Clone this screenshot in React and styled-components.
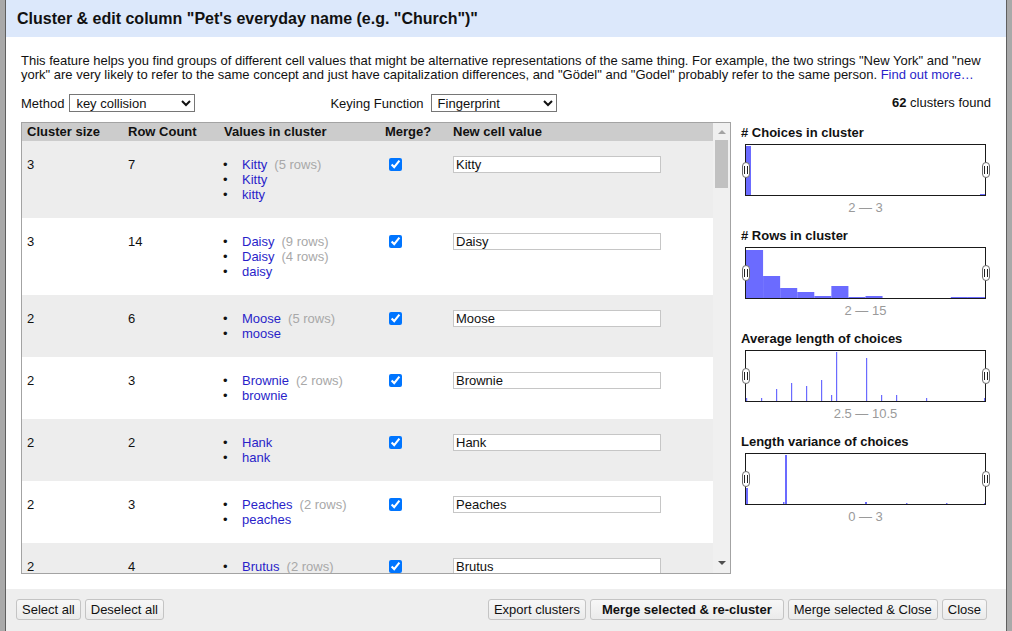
import React from 'react';
import styled, { createGlobalStyle } from 'styled-components';

const GlobalStyle = createGlobalStyle`
  html, body {
    margin: 0;
    padding: 0;
    background: #a9a9a9;
  }
  body {
    font-family: "Liberation Sans", Arial, sans-serif;
    font-size: 13px;
    color: #111;
  }
`;

const FONT = '"Liberation Sans", Arial, sans-serif';

const Screen = styled.div`
  display: flex;
  height: 631px;
  padding: 0 5px;
  box-sizing: border-box;
  background: #a9a9a9;
`;

const Dialog = styled.div`
  flex: 1;
  min-width: 0;
  display: flex;
  flex-direction: column;
  background: #fff;
  border-left: 1px solid #5f5f5f;
  border-right: 1px solid #5f5f5f;
`;

const Header = styled.div`
  flex: none;
  height: 37px;
  display: flex;
  align-items: center;
  padding: 0 11px;
  background: #dce8fb;
  font: bold 16px ${FONT};
  color: #111;
`;

const Body = styled.div`
  flex: 1;
  min-height: 0;
  display: flex;
  flex-direction: column;
  padding: 17px 15px 15px;
`;

const Description = styled.p`
  margin: 0;
  line-height: 14px;
  font-size: 13px;

  a {
    color: #2a1fc9;
    text-decoration: none;
  }
`;

const Controls = styled.div`
  display: flex;
  align-items: center;
  height: 18px;
  margin: 12px 0 10px;
`;

const Field = styled.label`
  display: flex;
  align-items: center;
  gap: ${(p) => p.$gap}px;
  margin-left: ${(p) => p.$offset || 0}px;
`;

const Select = styled.select`
  width: ${(p) => p.$width}px;
  height: 18px;
  margin-top: -1px;
  font: 13px ${FONT};
  color: #111;
  border: 1px solid #767676;
  border-radius: 0;
  background: #fff;
  padding: 0 2px;
`;

const Count = styled.div`
  margin-left: auto;
  margin-top: -1px;
  b { font-weight: bold; }
`;

const Main = styled.div`
  flex: 1;
  min-height: 0;
  display: flex;
  gap: 10px;
`;

const TableFrame = styled.div`
  width: 710px;
  flex: none;
  display: flex;
  box-sizing: border-box;
  border: 1px solid #a3a3a3;
`;

const TableScroll = styled.div`
  flex: 1;
  min-width: 0;
  overflow: hidden;
`;

const ScrollBar = styled.div`
  width: 17px;
  flex: none;
  display: flex;
  flex-direction: column;
  background: #f0f0f0;
`;

const ScrollArrow = styled.div`
  height: 17px;
  display: flex;
  justify-content: center;
  align-items: ${(p) => (p.$down ? 'flex-start' : 'flex-end')};
  padding: ${(p) => (p.$down ? '5px 0 0' : '0 0 6px')};
  box-sizing: border-box;

  &::before {
    content: '';
    width: 0;
    height: 0;
    border-left: 4px solid transparent;
    border-right: 4px solid transparent;
    ${(p) => (p.$down
    ? 'border-top: 4px solid #505050;'
    : 'border-bottom: 4px solid #a3a3a3;')}
  }
`;

const ScrollTrack = styled.div`
  flex: 1;
  padding: 0 2px;
`;

const ScrollThumb = styled.div`
  height: 48px;
  background: #c1c1c1;
`;

const COLS = '101px 96px 161px 68px 1fr';

const HeadRow = styled.div`
  display: grid;
  grid-template-columns: ${COLS};
  background: #cccccc;
  font-weight: bold;
  line-height: 18px;
`;

const Row = styled.div`
  display: grid;
  grid-template-columns: ${COLS};
  padding: 16px 0;
  line-height: 15px;
  background: ${(p) => (p.$odd ? '#ededed' : '#fff')};
`;

const Cell = styled.div`
  padding: 0 5px;
  min-width: 0;
`;

const Values = styled.ul`
  margin: 0;
  padding-left: 18px;
  list-style: disc;
`;

const Value = styled.li`
  color: #111;

  &::marker {
    content: '•\u00a0\u00a0\u00a0\u00a0';
    color: #111;
  }
`;

const ValueName = styled.span`
  color: #2a1fc9;
`;

const ValueRows = styled.span`
  color: #a8a8a8;
  margin-left: 7px;
`;

const Check = styled.input`
  width: 13px;
  height: 13px;
  margin: 1px 0 0 4px;
`;

const TextInput = styled.input`
  width: 208px;
  height: 17px;
  box-sizing: border-box;
  margin-top: -1px;
  padding: 0 2px;
  border: 1px solid #c6c6c6;
  font: 13px ${FONT};
  color: #111;
`;

const Side = styled.div`
  flex: 1;
  padding-top: 3px;
`;

const Hist = styled.div`
  margin-bottom: 12px;
`;

const HistTitle = styled.div`
  font-weight: bold;
  line-height: 16px;
`;

const HistBox = styled.div`
  position: relative;
  width: 241px;
  height: 52px;
  box-sizing: border-box;
  margin: 3px 0 0 4px;
  border: 1px solid #1a1a1a;

  svg {
    display: block;
  }
`;

const Handle = styled.span`
  position: absolute;
  top: 50%;
  ${(p) => (p.$right ? 'right: -5px;' : 'left: -4px;')}
  width: 8px;
  height: 16px;
  margin-top: -8px;
  box-sizing: border-box;
  border: 1px solid #6a6a6a;
  border-radius: 4px;
  background: #fff;

  &::before {
    content: '';
    position: absolute;
    left: 1px;
    top: 3px;
    width: 2px;
    height: 8px;
    border-left: 1px solid #222;
    border-right: 1px solid #222;
  }
`;

const HistRange = styled.div`
  width: 241px;
  margin: 4px 0 0 4px;
  text-align: center;
  line-height: 16px;
  color: #9a9a9a;
`;

const Footer = styled.div`
  flex: none;
  height: 42px;
  display: flex;
  align-items: center;
  gap: 4px;
  padding: 0 19px 0 10px;
  background: #eeeeee;
`;

const Spacer = styled.div`
  flex: 1;
`;

const Button = styled.button`
  height: 21px;
  margin-top: -1px;
  padding: 0 ${(p) => (p.$primary ? 11 : 5)}px;
  border: 1px solid #c4c4c4;
  border-radius: 3px;
  background: linear-gradient(#f7f7f7, #ebebeb);
  font: ${(p) => (p.$primary ? 'bold' : 'normal')} 13px ${FONT};
  color: #111;
  cursor: pointer;
`;

const BAR = '#6b6bff';

const clusters = [
  { size: 3, count: 7, values: [['Kitty', 5], ['Kitty'], ['kitty']], merged: 'Kitty' },
  { size: 3, count: 14, values: [['Daisy', 9], ['Daisy', 4], ['daisy']], merged: 'Daisy' },
  { size: 2, count: 6, values: [['Moose', 5], ['moose']], merged: 'Moose' },
  { size: 2, count: 3, values: [['Brownie', 2], ['brownie']], merged: 'Brownie' },
  { size: 2, count: 2, values: [['Hank'], ['hank']], merged: 'Hank' },
  { size: 2, count: 3, values: [['Peaches', 2], ['peaches']], merged: 'Peaches' },
  { size: 2, count: 4, values: [['Brutus', 2], ['brutus']], merged: 'Brutus' },
  { size: 2, count: 3, values: [['Max', 2], ['max']], merged: 'Max' },
];

const rowsBins = [48, 22, 10, 6, 2, 12, 1, 2, 0, 0, 0, 0, 1, 1];

const histograms = [
  {
    title: '# Choices in cluster',
    range: '2 — 3',
    bars: [
      { x: 0, w: 5, h: 49 },
      { x: 234, w: 5, h: 1 },
    ],
  },
  {
    title: '# Rows in cluster',
    range: '2 — 15',
    bars: rowsBins.map((h, i) => ({ x: i * 17.07, w: 17.07, h })),
  },
  {
    title: 'Average length of choices',
    range: '2.5 — 10.5',
    bars: [
      [0, 3], [15, 3], [30, 12], [45, 18], [60, 15], [75, 21], [85, 6],
      [90, 49], [120, 43], [135, 6], [150, 6], [180, 3], [238, 3],
    ].map(([x, h]) => ({ x, w: 1.2, h })),
  },
  {
    title: 'Length variance of choices',
    range: '0 — 3',
    bars: [
      { x: 0, w: 2, h: 16 },
      { x: 37, w: 1.5, h: 2 },
      { x: 39, w: 2, h: 49 },
      { x: 119, w: 2, h: 2 },
      { x: 160, w: 1.5, h: 1 },
      { x: 200, w: 1.5, h: 1 },
      { x: 238, w: 1.5, h: 1 },
    ],
  },
];

function Histogram({ title, range, bars }) {
  return (
    <Hist>
      <HistTitle>{title}</HistTitle>
      <HistBox>
        <svg width="239" height="50" viewBox="0 0 239 50">
          {bars.map((b, i) => (
            <rect key={i} x={b.x} y={50 - b.h} width={b.w} height={b.h} fill={BAR} />
          ))}
        </svg>
        <Handle />
        <Handle $right />
      </HistBox>
      <HistRange>{range}</HistRange>
    </Hist>
  );
}

function ClusterRow({ cluster, odd }) {
  return (
    <Row $odd={odd}>
      <Cell>{cluster.size}</Cell>
      <Cell>{cluster.count}</Cell>
      <Cell>
        <Values>
          {cluster.values.map(([v, n], i) => (
            <Value key={i}>
              <ValueName>{v}</ValueName>
              {n ? <ValueRows>({n} rows)</ValueRows> : null}
            </Value>
          ))}
        </Values>
      </Cell>
      <Cell>
        <Check type="checkbox" defaultChecked />
      </Cell>
      <Cell>
        <TextInput type="text" defaultValue={cluster.merged} />
      </Cell>
    </Row>
  );
}

export default function App() {
  return (
    <>
      <GlobalStyle />
      <Screen>
        <Dialog>
          <Header>Cluster &amp; edit column "Pet's everyday name (e.g. "Church")"</Header>
          <Body>
            <Description>
              This feature helps you find groups of different cell values that might be alternative
              representations of the same thing. For example, the two strings "New York" and "new
              york" are very likely to refer to the same concept and just have capitalization
              differences, and "Gödel" and "Godel" probably refer to the same person.{' '}
              <a href="#help">Find out more…</a>
            </Description>
            <Controls>
              <Field $gap={5}>
                Method
                <Select $width={126} defaultValue="key collision">
                  <option>key collision</option>
                  <option>nearest neighbor</option>
                </Select>
              </Field>
              <Field $gap={7} $offset={135}>
                Keying Function
                <Select $width={126} defaultValue="Fingerprint">
                  <option>Fingerprint</option>
                  <option>ngram-fingerprint</option>
                  <option>metaphone3</option>
                  <option>cologne-phonetic</option>
                </Select>
              </Field>
              <Count>
                <b>62</b> clusters found
              </Count>
            </Controls>
            <Main>
              <TableFrame>
                <TableScroll>
                  <HeadRow>
                    <Cell>Cluster size</Cell>
                    <Cell>Row Count</Cell>
                    <Cell>Values in cluster</Cell>
                    <Cell>Merge?</Cell>
                    <Cell>New cell value</Cell>
                  </HeadRow>
                  {clusters.map((c, i) => (
                    <ClusterRow key={i} cluster={c} odd={i % 2 === 0} />
                  ))}
                </TableScroll>
                <ScrollBar>
                  <ScrollArrow />
                  <ScrollTrack>
                    <ScrollThumb />
                  </ScrollTrack>
                  <ScrollArrow $down />
                </ScrollBar>
              </TableFrame>
              <Side>
                {histograms.map((h) => (
                  <Histogram key={h.title} {...h} />
                ))}
              </Side>
            </Main>
          </Body>
          <Footer>
            <Button>Select all</Button>
            <Button>Deselect all</Button>
            <Spacer />
            <Button>Export clusters</Button>
            <Button $primary>Merge selected &amp; re-cluster</Button>
            <Button>Merge selected &amp; Close</Button>
            <Button>Close</Button>
          </Footer>
        </Dialog>
      </Screen>
    </>
  );
}
